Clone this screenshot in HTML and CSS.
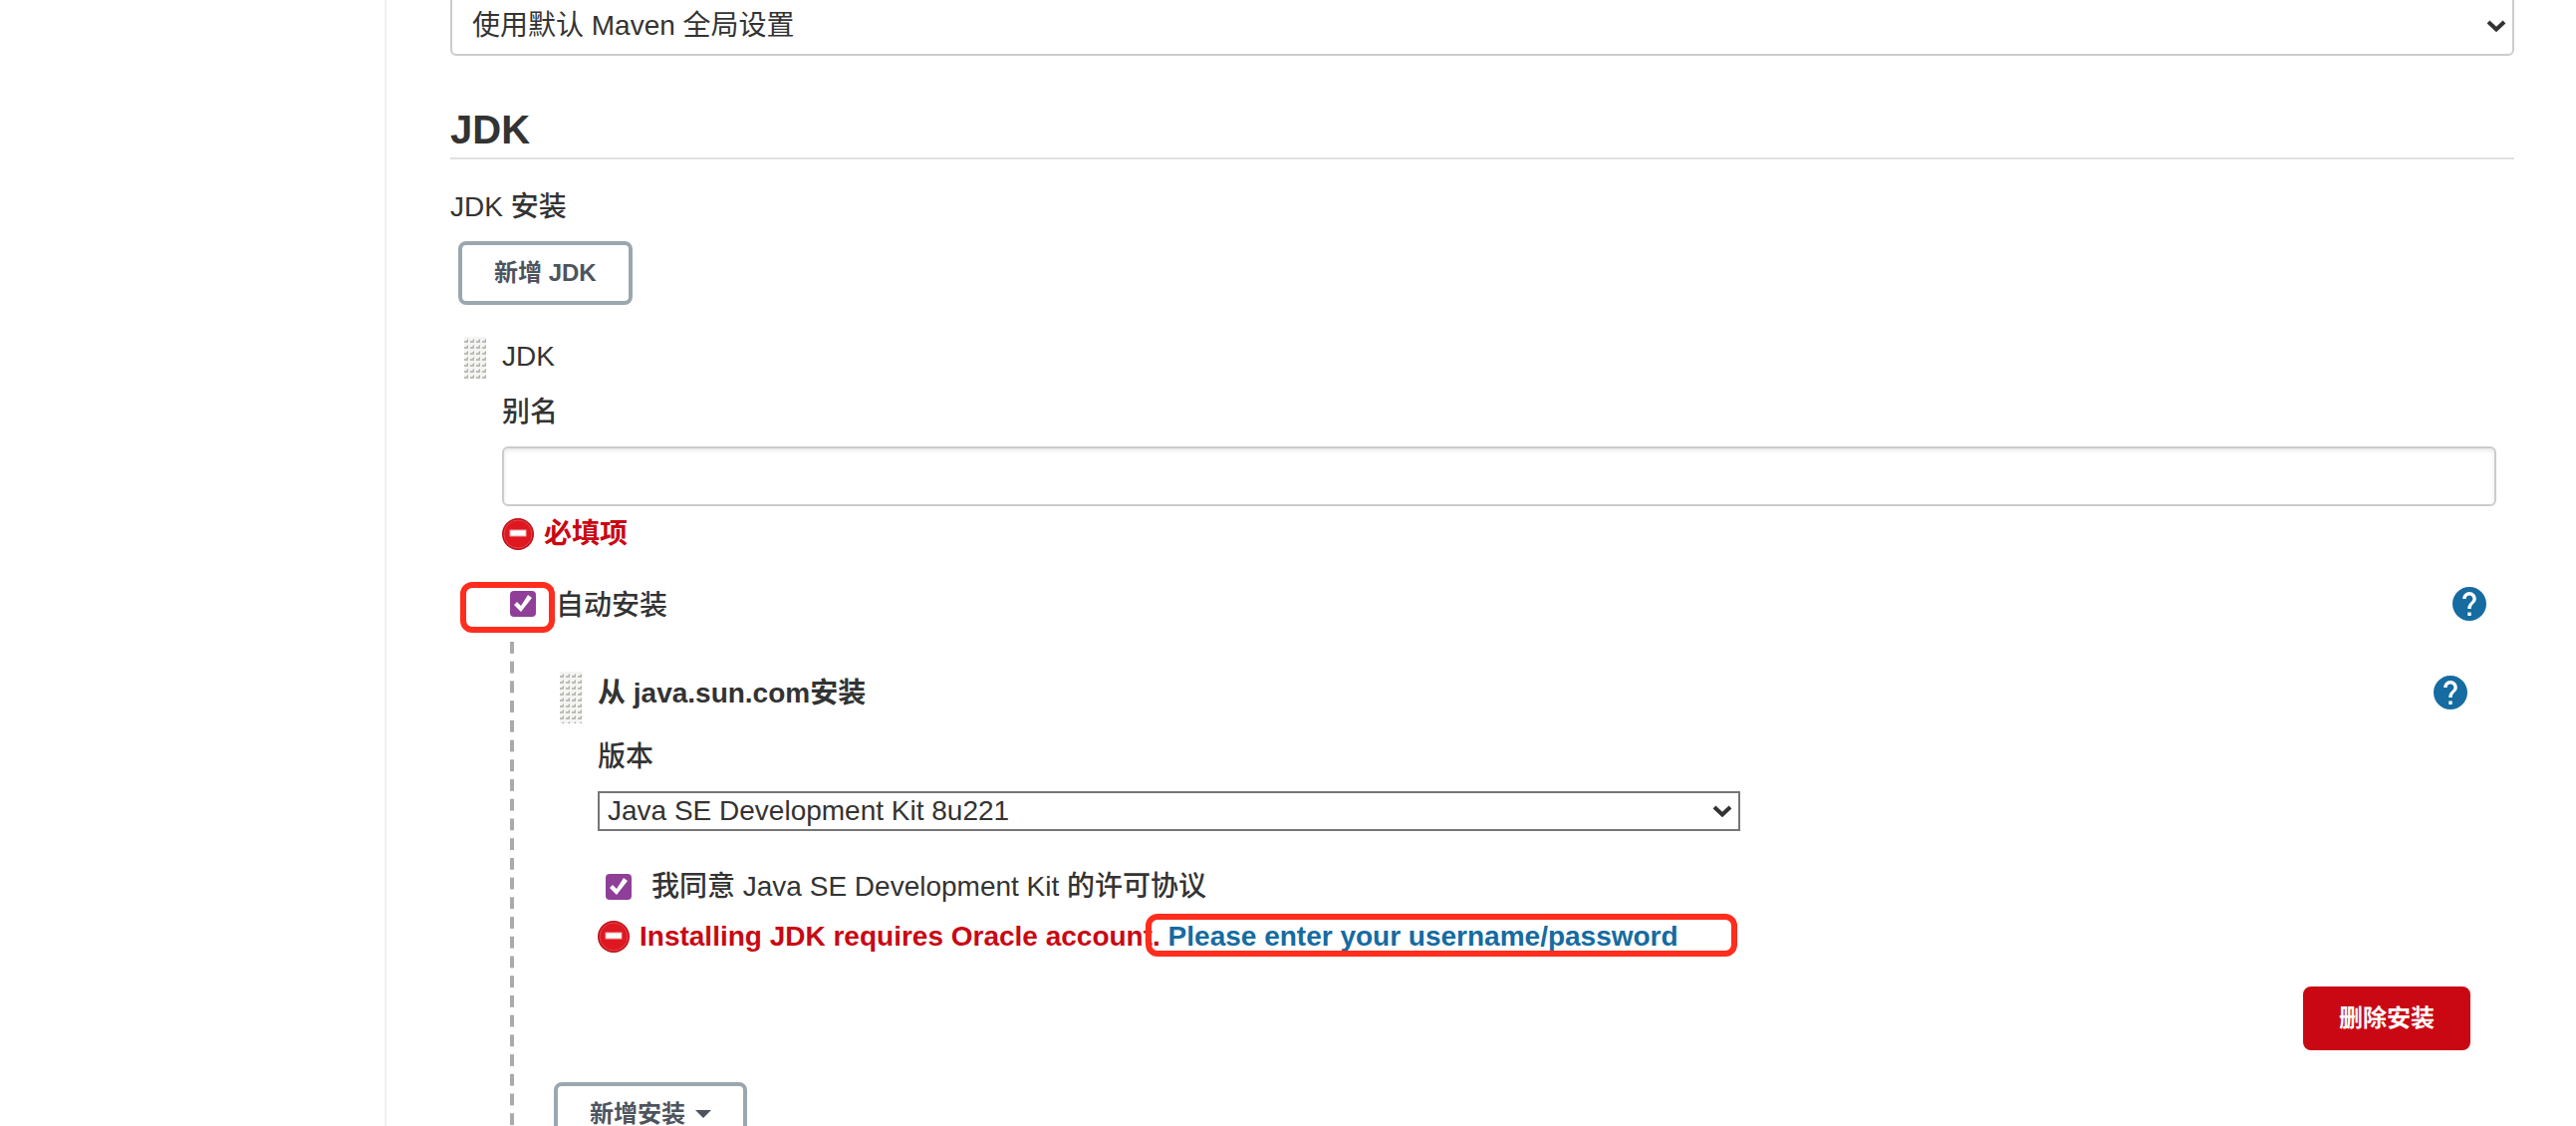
FILE: index.html
```
<!DOCTYPE html>
<html lang="zh-CN">
<head>
    <meta charset="UTF-8">
    <meta name="viewport" content="width=device-width, initial-scale=1.0">
    <title>JDK</title>
    <link rel="stylesheet" href="styles.css">
</head>
<body>
    <svg class="sprite" aria-hidden="true">
        <defs>
            <radialGradient id="errorFill" cx="50%" cy="50%" r="50%">
                <stop offset="80%" stop-color="#df1720"/>
                <stop offset="100%" stop-color="#b50d14"/>
            </radialGradient>
            <pattern id="gripDots" width="6" height="6" patternUnits="userSpaceOnUse">
                <path d="M0 0H6V6H0Z" fill="#f4f4f2"/>
                <path d="M0 6L4 2V6Z" fill="#a9a9a4"/>
                <path d="M0 4H4V6H0Z" fill="#bdbdb8"/>
            </pattern>
        </defs>
        <symbol id="error" viewBox="0 0 32 32">
            <circle cx="16" cy="16" r="16" fill="url(#errorFill)"/>
            <circle cx="16" cy="16" r="14" fill="none" stroke="#e5474e"/>
            <rect x="8" y="12" width="16" height="6" fill="#fff" stroke="#f3a5a8"/>
        </symbol>
        <symbol id="help" viewBox="2 2 20 20">
            <path fill="#166ba1" d="M12 2C6.480 2 2 6.480 2 12s4.480 10 10 10 10-4.480 10-10S17.520 2 12 2zm1 17h-2v-2h2v2zm2.070-7.750l-.9.920C13.450 12.900 13 13.500 13 15h-2v-.5c0-1.100.45-2.100 1.170-2.830l1.240-1.260c.37-.36.59-.86.59-1.410 0-1.100-.9-2-2-2s-2 .9-2 2H8c0-2.210 1.790-4 4-4s4 1.790 4 4c0 .88-.36 1.680-.93 2.250z"/>
        </symbol>
        <symbol id="chevron" viewBox="0 0 20 12">
            <path d="M2 2L10 9.500L18 2" fill="none" stroke="#333" stroke-width="4"/>
        </symbol>
    </svg>

    <div class="page">
        <aside class="side-panel"></aside>
        <main class="main-panel">
            <div class="select-wrap">
                <select class="select" aria-label="Maven">
                    <option>使用默认 Maven 全局设置</option>
                </select>
                <svg class="chevron"><use href="#chevron"/></svg>
            </div>

            <h2 class="section-title">JDK</h2>
            <div class="section-label">JDK 安装</div>
            <button type="button" class="btn btn-add">新增 JDK</button>

            <div class="chunk">
                <svg class="grip"><rect width="22" height="42" fill="url(#gripDots)"/></svg>
                <div class="chunk-body">
                    <div class="text">JDK</div>
                    <label class="label" for="alias">别名</label>
                    <input type="text" class="input" id="alias">
                    <div class="error">
                        <svg class="error-icon"><use href="#error"/></svg>
                        <span>必填项</span>
                    </div>

                    <div class="check-row auto-row">
                        <input type="checkbox" class="checkbox" id="autoInstall" checked>
                        <label for="autoInstall">自动安装</label>
                        <a href="#" class="help" aria-label="帮助"><svg><use href="#help"/></svg></a>
                        <span class="mark mark-check"></span>
                    </div>

                    <div class="nested">
                        <div class="chunk installer">
                            <svg class="grip"><rect width="22" height="52" fill="url(#gripDots)"/></svg>
                            <div class="chunk-body">
                                <div class="installer-title">
                                    <b>从 java.sun.com安装</b>
                                    <a href="#" class="help" aria-label="帮助"><svg><use href="#help"/></svg></a>
                                </div>
                                <label class="label version-label" for="version">版本</label>
                                <div class="select-wrap version-wrap">
                                    <select class="select select-plain" id="version">
                                        <option>Java SE Development Kit 8u221</option>
                                    </select>
                                    <svg class="chevron"><use href="#chevron"/></svg>
                                </div>
                                <div class="check-row license-row">
                                    <input type="checkbox" class="checkbox" id="license" checked>
                                    <label for="license">我同意 Java SE Development Kit 的许可协议</label>
                                </div>
                                <div class="error account-error">
                                    <svg class="error-icon"><use href="#error"/></svg>
                                    <span>Installing JDK requires Oracle account. <span class="link-wrap"><a href="#">Please enter your username/password</a><span class="mark mark-link"></span></span></span>
                                </div>
                                <div class="actions">
                                    <button type="button" class="btn btn-danger">删除安装</button>
                                </div>
                            </div>
                        </div>
                        <button type="button" class="btn">新增安装<span class="caret"></span></button>
                    </div>
                </div>
            </div>
        </main>
    </div>
</body>
</html>
```
FILE: styles.css
```
* {
    box-sizing: border-box;
}
body {
    margin: 0;
    height: 100vh;
    overflow: hidden;
    background: #fff;
    color: #333;
    font-family: "Liberation Sans", "Noto Sans CJK SC", sans-serif;
    font-size: 28px;
    line-height: 36px;
}
.sprite {
    position: absolute;
    width: 0;
    height: 0;
}
.page {
    display: flex;
    min-height: 100vh;
}
.side-panel {
    flex: 0 0 388px;
    border-right: 2px solid #edf1f5;
}
/* the panel is scrolled a little past the first field */
.main-panel {
    flex: 1;
    min-width: 0;
    margin-top: -4px;
    padding: 0 62px 0 64px;
}

/* fields */
.select-wrap {
    display: grid;
    align-items: center;
}
.select-wrap > * {
    grid-area: 1 / 1;
}
.select,
.input {
    display: block;
    width: 100%;
    height: 60px;
    padding: 0 20px;
    border: 2px solid #ccc;
    border-radius: 6px;
    background: #fff;
    color: #333;
    font: inherit;
}
.select {
    appearance: none;
}
.select-plain {
    height: 40px;
    padding: 0 8px;
    border-color: #767676;
    border-radius: 0;
}
.input {
    margin-top: 16px;
    box-shadow: inset 0 2px 4px rgba(0, 0, 0, 0.1);
}
.chevron {
    justify-self: end;
    width: 20px;
    height: 12px;
    margin-right: 8px;
    pointer-events: none;
}
.label,
.section-label {
    display: block;
    font-weight: 500;
}
.label {
    margin-top: 20px;
}

/* section */
.section-title {
    margin: 50px 0 30px;
    padding-bottom: 4px;
    border-bottom: 2px solid #e0e0e0;
    font-size: 40px;
    line-height: 48px;
}
.btn {
    display: inline-flex;
    align-items: center;
    height: 64px;
    padding: 0 32px;
    border: 4px solid #9ba7af;
    border-radius: 8px;
    background: #fff;
    color: #4d545d;
    font: inherit;
    font-size: 24px;
    font-weight: bold;
    cursor: pointer;
}
.btn-add {
    margin: 16px 8px 32px;
}
.btn-danger {
    border-color: #c90814;
    background: #c90814;
    color: #fff;
}
.caret {
    margin-left: 10px;
    border: 8px solid transparent;
    border-top-color: #4d545d;
    border-bottom: 0;
}

/* repeatable chunk */
.chunk {
    display: flex;
    gap: 16px;
    margin-left: 14px;
}
.grip {
    flex: none;
    width: 22px;
    height: 42px;
}
.chunk-body {
    flex: 1;
    min-width: 0;
    padding: 2px 18px 0 0;
}
.error {
    display: flex;
    align-items: center;
    gap: 10px;
    height: 32px;
    margin-top: 12px;
    color: #c90814;
    font-weight: bold;
}
.error a {
    color: #166ba1;
    text-decoration: none;
}
.error-icon {
    flex: none;
    width: 32px;
    height: 32px;
}
.check-row {
    position: relative;
    display: flex;
    align-items: center;
    margin-top: 38px;
    padding-left: 8px;
    font-weight: 500;
}
.checkbox {
    appearance: none;
    flex: none;
    width: 26px;
    height: 26px;
    margin: 0 20px 0 0;
    border-radius: 4px;
    background: #8f3f97;
}
.checkbox:checked::before {
    content: "";
    display: block;
    width: 26px;
    height: 26px;
    background: #fff;
    clip-path: polygon(4px 14px, 7px 11px, 11px 15px, 18px 4px, 22px 7px, 11px 21px);
}
.auto-row {
    height: 32px;
}
.auto-row label {
    padding-top: 4px;
}
.help {
    width: 34px;
    height: 34px;
    margin-left: auto;
}
.help svg {
    display: block;
    width: 34px;
    height: 34px;
}
.auto-row .help {
    margin-right: 10px;
}

/* red outlines */
.mark {
    position: absolute;
    border: 6px solid #ff2d1e;
    border-radius: 12px;
    pointer-events: none;
}
.mark-check {
    top: -6px;
    left: -42px;
    width: 95px;
    height: 51px;
}
.link-wrap {
    position: relative;
}
.mark-link {
    top: -7px;
    left: -23px;
    right: -59px;
    height: 43px;
}

/* automatic installers */
.nested {
    margin: 22px 0 0 8px;
    padding: 30px 0 7px 44px;
    background: linear-gradient(#aaa 60%, transparent 60%) left top / 4px 20px;
    background-repeat: no-repeat round;
}
.installer {
    margin: 0 8px 32px 6px;
}
.installer .grip {
    height: 52px;
}
.installer > .chunk-body {
    padding-top: 4px;
}
.installer-title {
    display: flex;
    align-items: flex-start;
    height: 36px;
    padding-right: 3px;
}
.version-label {
    margin: 28px 0 16px;
}
.version-wrap {
    width: 61%;
}
.account-error {
    margin-top: 16px;
}
.actions {
    display: flex;
    justify-content: flex-end;
    margin-top: 34px;
}
```
